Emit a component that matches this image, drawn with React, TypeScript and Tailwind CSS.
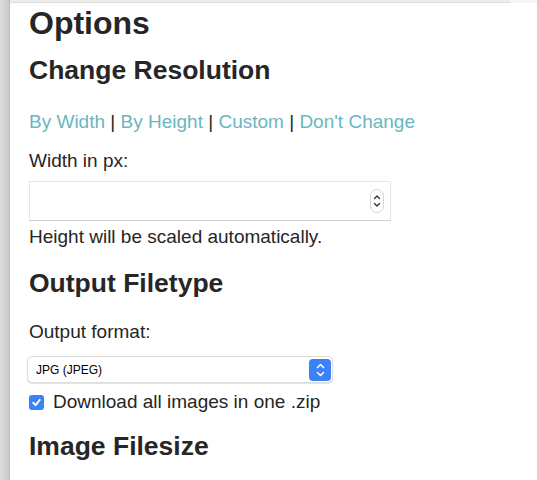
import React from "react";

function Spinner() {
  return (
    <div className="w-[14px] h-[24px] rounded-full border border-[#d6d6d6] bg-white flex flex-col items-center justify-center gap-[2px]">
      <svg width="8" height="6" viewBox="0 0 8 6"><path d="M1.5 4.5 L4 2 L6.5 4.5" fill="none" stroke="#333" strokeWidth="1.4" strokeLinecap="round" strokeLinejoin="round" /></svg>
      <svg width="8" height="6" viewBox="0 0 8 6"><path d="M1.5 1.5 L4 4 L6.5 1.5" fill="none" stroke="#333" strokeWidth="1.4" strokeLinecap="round" strokeLinejoin="round" /></svg>
    </div>
  );
}

export default function App() {
  const link = "text-[#6bb6c0]";
  return (
    <div className="flex min-h-[480px] bg-white text-[#262626]" style={{ fontFamily: '"Liberation Sans", Arial, sans-serif' }}>
      <div className="w-[10px] shrink-0 bg-gradient-to-r from-[#dcdcdc] to-[#c9c9c9] border-r border-[#bdbdbd]" />
      <div className="flex-1 flex flex-col">
        <div className="flex h-[3px]">
          <div className="w-[500px] bg-[#ececec] border-b border-[#dedede]" />
          <div className="flex-1 bg-[#f5f5f5]" />
        </div>
        <div className="pl-[19px] pr-4 flex flex-col">
          <h1 className="text-[32px] leading-[40px] font-bold">Options</h1>
          <h2 className="mt-[11px] text-[26.5px] leading-[32px] font-bold">Change Resolution</h2>
          <div className="mt-[24px] text-[19px] leading-[24px] whitespace-nowrap">
            <span className={link}>By Width</span> | <span className={link}>By Height</span> |{" "}
            <span className={link}>Custom</span> | <span className={link}>Don't Change</span>
          </div>
          <div className="mt-[15px] text-[19px] leading-[24px]">Width in px:</div>
          <div className="mt-[8px] w-[362px] h-[40px] bg-white border border-[#e6e6e6] border-b-[#d0d0d0] flex items-center justify-end pr-[6px]">
            <Spinner />
          </div>
          <div className="mt-[4px] text-[19px] leading-[24px]">Height will be scaled automatically.</div>
          <h2 className="mt-[18px] text-[26.5px] leading-[32px] font-bold">Output Filetype</h2>
          <div className="mt-[21px] text-[19px] leading-[24px]">Output format:</div>
          <div className="mt-[12px] w-[306px] h-[27px] rounded-[5px] bg-white border border-[#dcdcdc] shadow-[0_1px_1px_rgba(0,0,0,0.12)] flex items-center justify-between pl-[8px] pr-[1px] -ml-[2px]">
            <span className="text-[12px] leading-none text-black">JPG (JPEG)</span>
            <div className="w-[22px] h-[22px] rounded-[4px] bg-[#3a82f6] flex flex-col items-center justify-center gap-[2px]">
              <svg width="9" height="6" viewBox="0 0 9 6"><path d="M1.5 4.5 L4.5 1.5 L7.5 4.5" fill="none" stroke="#fff" strokeWidth="1.5" strokeLinecap="round" strokeLinejoin="round" /></svg>
              <svg width="9" height="6" viewBox="0 0 9 6"><path d="M1.5 1.5 L4.5 4.5 L7.5 1.5" fill="none" stroke="#fff" strokeWidth="1.5" strokeLinecap="round" strokeLinejoin="round" /></svg>
            </div>
          </div>
          <div className="mt-[7px] flex items-center gap-[9px] text-[19px] leading-[24px]">
            <div className="w-[15px] h-[15px] rounded-[3px] bg-[#3a82f6] flex items-center justify-center">
              <svg width="11" height="11" viewBox="0 0 10 10"><path d="M2 5.2 L4.2 7.4 L8 2.6" fill="none" stroke="#fff" strokeWidth="1.7" strokeLinecap="round" strokeLinejoin="round" /></svg>
            </div>
            <span>Download all images in one .zip</span>
          </div>
          <h2 className="mt-[16px] text-[26.5px] leading-[32px] font-bold">Image Filesize</h2>
        </div>
      </div>
    </div>
  );
}
